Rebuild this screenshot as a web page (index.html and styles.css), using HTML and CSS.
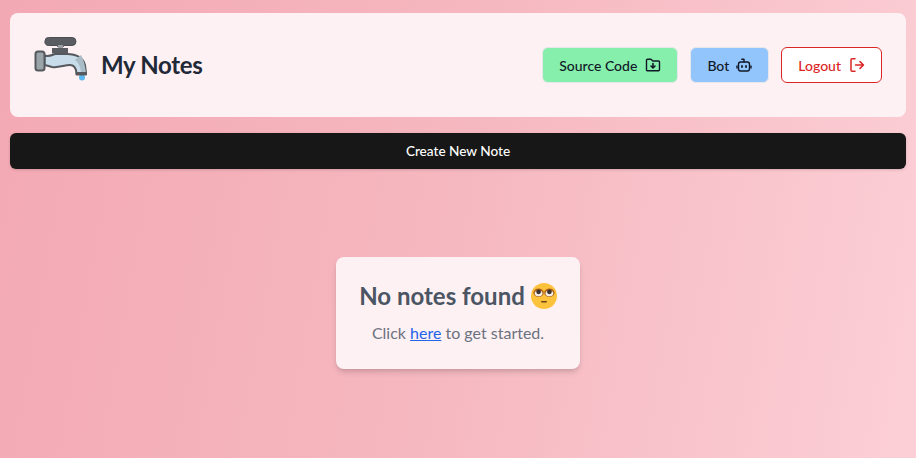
FILE: index.html
```html
<!DOCTYPE html>
<html lang="en">
<head>
  <meta charset="UTF-8">
  <meta name="viewport" content="width=device-width, initial-scale=1.0">
  <title>My Notes</title>
  <link rel="stylesheet" href="styles.css">
</head>
<body>
  <header class="navbar">
    <div class="brand">
      <svg class="brand-logo" viewBox="0 0 54 44" width="54" height="44">
        <path d="M11 4 a3.5 3.5 0 0 1 3.5-3.5 H38 a3.5 3.5 0 0 1 0 8 H30 L29 10 H24 L23 8.5 H14.5 A3.5 3.5 0 0 1 11 4 Z" fill="#595d62" stroke="#4b4f54" stroke-width="1"/>
        <rect x="24" y="8" width="5" height="3" fill="#9a9ea3"/>
        <path d="M18 11 H34 V16.5 H18 Z" fill="#595d62"/>
        <path d="M10.5 18.5 C14 20 17 18.5 21 17 H33 C43 17 49 21 51 28 L52 36 H42.5 C42 31 40 28 36 28 C30 28 25 31 18 30 C15 29.5 12 28 10.5 28 Z" fill="#c9dce9" stroke="#55595e" stroke-width="2" stroke-linejoin="round"/>
        <path d="M47 18 C50 23 51 29 52 36 H47 C46.5 30 45 26 41 23 Z" fill="#a9bcc8"/>
        <rect x="1.5" y="14.5" width="9" height="19" rx="2.5" fill="#9ba4a8" stroke="#55595e" stroke-width="2"/>
        <circle cx="48" cy="40.5" r="3" fill="#5cb8f0"/>
        <rect x="41.5" y="35" width="11.5" height="3.5" rx="1.2" fill="#55595e"/>
      </svg>
      <h1 class="brand-title">My Notes</h1>
    </div>
    <nav class="nav-actions">
      <a class="btn btn-green" href="#">Source Code
        <svg class="btn-icon" viewBox="0 0 16 16" width="16" height="16" fill="none" stroke="currentColor" stroke-width="1.4" stroke-linecap="round" stroke-linejoin="round">
          <path d="M1.5 3.2 a1 1 0 0 1 1-1 H6 L7.8 4 H13.5 a1 1 0 0 1 1 1 V12.8 a1 1 0 0 1-1 1 H2.5 a1 1 0 0 1-1-1 Z"/>
          <path d="M8 6.6 V10.6 M6 9 L8 11 L10 9" stroke-width="1.6"/>
        </svg>
      </a>
      <a class="btn btn-blue" href="#">Bot
        <svg class="btn-icon" viewBox="0 0 16 16" width="16" height="16" fill="none" stroke="currentColor" stroke-width="1.4" stroke-linecap="round" stroke-linejoin="round">
          <rect x="2.5" y="5" width="11" height="9" rx="2.2"/>
          <path d="M8 5 V2.2 H5.8 M1 9 V11 M15 9 V11"/>
          <path d="M6 9 V10 M10 9 V10" stroke-width="1.8"/>
        </svg>
      </a>
      <a class="btn btn-logout" href="#">Logout
        <svg class="btn-icon" viewBox="0 0 16 16" width="16" height="16" fill="none" stroke="currentColor" stroke-width="1.5" stroke-linecap="round" stroke-linejoin="round">
          <path d="M6 1.8 H3 a1 1 0 0 0-1 1 V13.2 a1 1 0 0 0 1 1 H6"/>
          <path d="M6.5 8 H14.5 M11 4.6 L14.5 8 L11 11.4"/>
        </svg>
      </a>
    </nav>
  </header>

  <button class="create-btn">Create New Note</button>

  <main class="empty-wrap">
    <div class="empty-card">
      <h2 class="empty-title">No notes found
        <svg class="empty-emoji" viewBox="0 0 26 26" width="26" height="26">
          <circle cx="13" cy="13" r="13" fill="#fdc23c"/>
          <ellipse cx="7.6" cy="9.8" rx="5.2" ry="4.2" fill="#b0651a"/>
          <ellipse cx="18.4" cy="9.8" rx="5.2" ry="4.2" fill="#b0651a"/>
          <ellipse cx="7.6" cy="10.4" rx="3.8" ry="2.8" fill="#f4efe8"/>
          <ellipse cx="18.4" cy="10.4" rx="3.8" ry="2.8" fill="#f4efe8"/>
          <circle cx="7.6" cy="8.8" r="2.4" fill="#3c3330"/>
          <circle cx="18.4" cy="8.8" r="2.4" fill="#3c3330"/>
          <rect x="10" y="18" width="6" height="1.6" rx="0.8" fill="#6b4416"/>
        </svg>
      </h2>
      <p class="empty-text">Click <a href="#">here</a> to get started.</p>
    </div>
  </main>
</body>
</html>
```

FILE: styles.css
```css
* {
  margin: 0;
  padding: 0;
  box-sizing: border-box;
}

html,
body {
  height: 100%;
}

body {
  font-family: 'Lato', 'Noto Sans', sans-serif;
  background: linear-gradient(100deg, #f3a9b3 0%, #f6b8c0 50%, #fccfd6 100%);
  padding: 13px 10px 0;
  overflow: hidden;
}

.navbar {
  display: flex;
  align-items: center;
  justify-content: space-between;
  height: 104px;
  padding: 0 24px;
  background: #fef1f3;
  border-radius: 8px;
}

.brand {
  display: flex;
  align-items: center;
  gap: 13px;
}

.brand-logo {
  margin-top: -12px;
}

.brand-title {
  font-size: 24px;
  font-weight: 700;
  letter-spacing: -0.35px;
  color: #1f2937;
  margin-bottom: 2px;
}

.nav-actions {
  display: flex;
  align-items: center;
  gap: 12px;
}

.btn {
  display: flex;
  align-items: center;
  gap: 8px;
  height: 36px;
  padding: 0 16px;
  border: 1px solid #e5e7eb;
  border-radius: 6px;
  font-size: 14px;
  font-weight: 500;
  color: #111827;
  text-decoration: none;
}

.btn-green {
  background: #86efac;
}

.btn-blue {
  gap: 7px;
  background: #93c5fd;
}

.btn-logout {
  background: #fff;
  border-color: #dc2626;
  color: #dc2626;
}

.create-btn {
  display: block;
  width: 100%;
  height: 36px;
  margin-top: 16px;
  padding-bottom: 1px;
  background: #171717;
  color: #fff;
  border: none;
  border-radius: 6px;
  font-family: inherit;
  font-size: 13.6px;
  font-weight: 500;
  box-shadow: 0 1px 3px rgba(0, 0, 0, 0.15);
}

.empty-wrap {
  display: flex;
  justify-content: center;
  padding-top: 88px;
}

.empty-card {
  width: 244px;
  height: 112px;
  padding-top: 24px;
  background: #fef1f3;
  border-radius: 8px;
  text-align: center;
  box-shadow: 0 4px 6px -1px rgba(0, 0, 0, 0.15), 0 2px 4px -2px rgba(0, 0, 0, 0.1);
}

.empty-title {
  display: flex;
  align-items: center;
  justify-content: center;
  gap: 6px;
  font-size: 24px;
  font-weight: 700;
  line-height: 30px;
  color: #4b5563;
}

.empty-text {
  margin-top: 10px;
  font-size: 16px;
  line-height: 24px;
  color: #6b7280;
}

.empty-text a {
  color: #2563eb;
}
```
